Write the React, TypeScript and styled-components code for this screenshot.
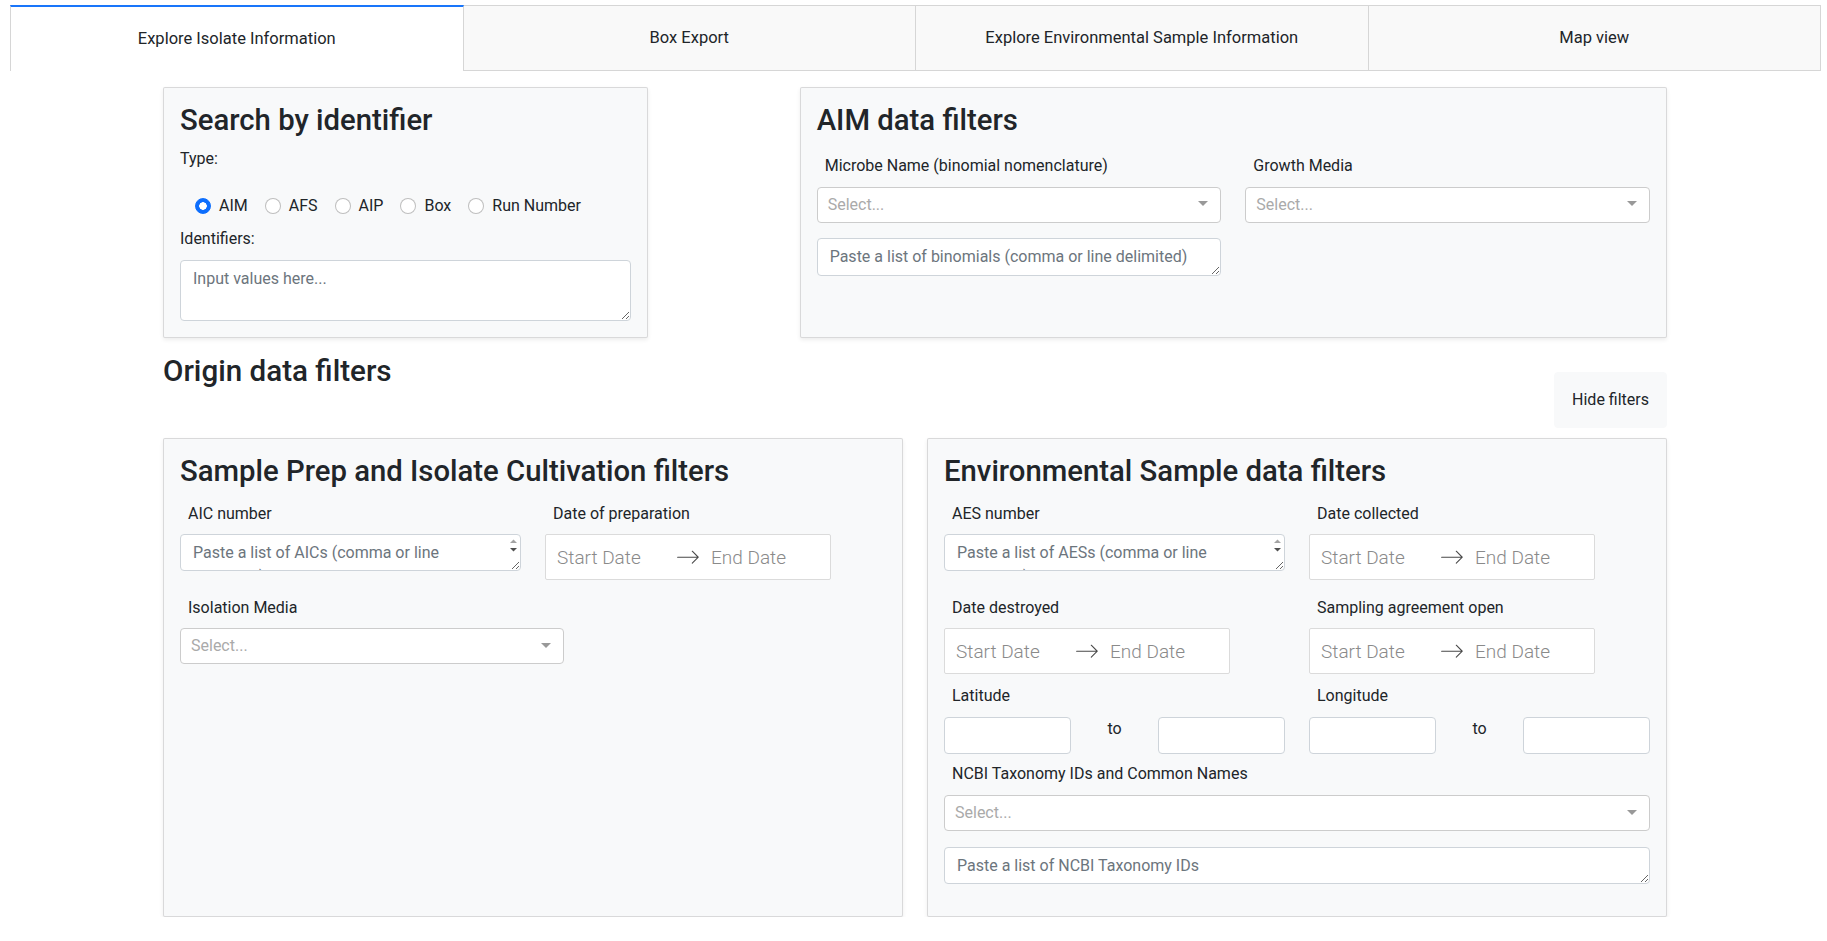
import styled, { createGlobalStyle } from "styled-components";

const GlobalStyle = createGlobalStyle`
  * { box-sizing: border-box; }
  body {
    margin: 0;
    background: #fff;
    color: #212529;
    font-family: Roboto, "Liberation Sans", sans-serif;
    font-size: 16px;
    line-height: 1.5;
  }
`;

const TabBar = styled.nav`
  display: flex;
  height: 66px;
  margin: 5px 6px 0 10px;
`;

const Tab = styled.div<{ $active?: boolean }>`
  flex: 1;
  display: flex;
  align-items: center;
  justify-content: center;
  padding-top: 1px;
  border: 1px solid #d6d6d6;
  border-top: ${(p) => (p.$active ? "2px solid #1975fa" : "1px solid #d6d6d6")};
  border-bottom: ${(p) => (p.$active ? "none" : "1px solid #d6d6d6")};
  background: ${(p) => (p.$active ? "#fff" : "#f9f9f9")};
  font-size: 16.5px;
  color: #212529;
  cursor: pointer;
  & + & {
    border-left: none;
  }
`;

const Page = styled.main`
  display: grid;
  grid-template-columns: repeat(12, minmax(0, 1fr));
  column-gap: 24px;
  padding: 16px 160px 0 163px;
`;

const Card = styled.section<{ $col: string }>`
  grid-column: ${(p) => p.$col};
  background: #f8f9fa;
  border: 1px solid rgba(0, 0, 0, 0.125);
  border-radius: 2px;
  box-shadow: 0 2px 4px rgba(0, 0, 0, 0.075);
  padding: 16px;
`;

const CardTitle = styled.h3<{ $mb: number }>`
  margin: 0 0 ${(p) => p.$mb}px;
  font-size: 29.3px;
  font-weight: 500;
  line-height: 33.6px;
`;

const SectionHead = styled.div`
  grid-column: 1 / -1;
  display: flex;
  justify-content: space-between;
  align-items: flex-start;
  margin: 17px 0 10px;
`;

const SectionTitle = styled.h3`
  margin: 0;
  font-size: 29.6px;
  font-weight: 500;
  line-height: 33.6px;
`;

const LightButton = styled.button`
  margin-top: 17px;
  padding: 15px 17px;
  border: 1px solid #f8f9fa;
  border-radius: 4px;
  background: #f8f9fa;
  color: #212529;
  font: inherit;
  line-height: 24px;
  cursor: pointer;
`;

const FieldLabel = styled.label<{ $indent?: boolean; $mb?: number }>`
  display: block;
  line-height: 24px;
  padding-left: ${(p) => (p.$indent ? 8 : 0)}px;
  margin-bottom: ${(p) => p.$mb ?? 8}px;
`;

const TwoCol = styled.div<{ $mb?: number }>`
  display: grid;
  grid-template-columns: minmax(0, 1fr) minmax(0, 1fr);
  column-gap: 24px;
  align-items: start;
  margin-bottom: ${(p) => p.$mb ?? 0}px;
`;

const RadioGroup = styled.div`
  display: flex;
  padding-left: 15px;
  margin: 23px 0 9px;
  line-height: 24px;
`;

const RadioItem = styled.label`
  display: inline-flex;
  align-items: center;
  gap: 8px;
  margin-right: 17px;
`;

const Radio = styled.input`
  appearance: none;
  margin: 0;
  width: 16px;
  height: 16px;
  border-radius: 50%;
  border: 1px solid rgba(0, 0, 0, 0.25);
  background: #fff;
  &:checked {
    border-color: #0d6efd;
    background: radial-gradient(circle, #fff 0 3.5px, #0d6efd 4px);
  }
`;

const TextArea = styled.textarea<{ $h: number; $scroll?: boolean }>`
  display: block;
  width: 100%;
  height: ${(p) => p.$h}px;
  margin: 0;
  padding: 6px ${(p) => (p.$scroll ? 24 : 12)}px 6px 12px;
  border: 1px solid #ced4da;
  border-radius: 4px;
  background: #fff;
  color: #212529;
  font: inherit;
  line-height: 24px;
  overflow: hidden;
  &::placeholder {
    color: #6c757d;
  }
`;

const ScrollBox = styled.div`
  position: relative;
`;

const ScrollArrows = styled.svg`
  position: absolute;
  top: 5px;
  right: 4px;
  pointer-events: none;
`;

const Dropdown = styled.div<{ $w?: string }>`
  display: flex;
  align-items: center;
  width: ${(p) => p.$w ?? "100%"};
  height: 36px;
  padding-left: 10px;
  border: 1px solid #ccc;
  border-radius: 4px;
  background: #fff;
  color: #aaa;
`;

const Caret = styled.span`
  margin-left: auto;
  margin-right: 12px;
  border-style: solid;
  border-width: 5px 5px 2.5px;
  border-color: #999 transparent transparent;
`;

const DateRange = styled.div`
  display: inline-flex;
  align-items: center;
  border: 1px solid #dbdbdb;
  border-radius: 2px;
  background: #fff;
`;

const DateInput = styled.input`
  width: 130px;
  padding: 11px 11px 9px;
  border: 0;
  background: transparent;
  font-family: Roboto, "Liberation Sans", sans-serif;
  font-size: 19px;
  font-weight: 300;
  line-height: 24px;
  color: #484848;
  &::placeholder {
    color: #8a8a8a;
  }
`;

const CoordPair = styled.div`
  display: grid;
  grid-template-columns: 127px 1fr 127px;
  align-items: start;
`;

const NumberInput = styled.input`
  width: 127px;
  height: 37px;
  border: 1px solid #ced4da;
  border-radius: 4px;
  background: #fff;
`;

const To = styled.span`
  text-align: center;
  line-height: 24px;
`;

const Spacer = styled.div<{ $h: number }>`
  height: ${(p) => p.$h}px;
`;

function Select({ width }: { width?: string }) {
  return (
    <Dropdown $w={width}>
      Select...
      <Caret />
    </Dropdown>
  );
}

function ListInput({ placeholder }: { placeholder: string }) {
  return (
    <ScrollBox>
      <TextArea $h={37} $scroll rows={1} placeholder={placeholder} />
      <ScrollArrows width="7" height="13" viewBox="0 0 7 13">
        <polygon points="0,4 3.5,0.5 7,4" fill="#a3a3a3" />
        <polygon points="0,9 7,9 3.5,12.5" fill="#505050" />
      </ScrollArrows>
    </ScrollBox>
  );
}

function DatePicker() {
  return (
    <DateRange>
      <DateInput placeholder="Start Date" readOnly />
      <svg width="24" height="24" viewBox="0 0 1000 1000" fill="#484848">
        <path d="M694 242l249 250c12 11 12 21 1 32L694 773c-5 5-10 7-16 7s-11-2-16-7c-11-11-11-21 0-32l210-210H68c-13 0-23-10-23-23s10-23 23-23h806L662 275c-21-22 11-54 32-33z" />
      </svg>
      <DateInput placeholder="End Date" readOnly />
    </DateRange>
  );
}

function Coords() {
  return (
    <CoordPair>
      <NumberInput type="number" />
      <To>to</To>
      <NumberInput type="number" />
    </CoordPair>
  );
}

const tabs = [
  "Explore Isolate Information",
  "Box Export",
  "Explore Environmental Sample Information",
  "Map view",
];
const idTypes = ["AIM", "AFS", "AIP", "Box", "Run Number"];

export default function App() {
  return (
    <>
      <GlobalStyle />
      <TabBar>
        {tabs.map((t, i) => (
          <Tab key={t} $active={i === 0}>
            {t}
          </Tab>
        ))}
      </TabBar>

      <Page>
        <Card $col="1 / span 4">
          <CardTitle $mb={9}>Search by identifier</CardTitle>
          <FieldLabel $mb={0}>Type:</FieldLabel>
          <RadioGroup>
            {idTypes.map((t, i) => (
              <RadioItem key={t}>
                <Radio type="radio" name="idtype" defaultChecked={i === 0} />
                {t}
              </RadioItem>
            ))}
          </RadioGroup>
          <FieldLabel $mb={9}>Identifiers:</FieldLabel>
          <TextArea $h={61} placeholder="Input values here..." />
        </Card>

        <Card $col="6 / span 7">
          <CardTitle $mb={16}>AIM data filters</CardTitle>
          <TwoCol $mb={15}>
            <div>
              <FieldLabel $indent $mb={9}>
                Microbe Name (binomial nomenclature)
              </FieldLabel>
              <Select />
            </div>
            <div>
              <FieldLabel $indent $mb={9}>
                Growth Media
              </FieldLabel>
              <Select />
            </div>
          </TwoCol>
          <TwoCol>
            <TextArea
              $h={38}
              rows={1}
              placeholder="Paste a list of binomials (comma or line delimited)"
            />
          </TwoCol>
        </Card>

        <SectionHead>
          <SectionTitle>Origin data filters</SectionTitle>
          <LightButton>Hide filters</LightButton>
        </SectionHead>

        <Card $col="1 / span 6">
          <CardTitle $mb={14}>Sample Prep and Isolate Cultivation filters</CardTitle>
          <TwoCol $mb={16}>
            <div>
              <FieldLabel $indent>AIC number</FieldLabel>
              <ListInput placeholder="Paste a list of AICs (comma or line delimited)" />
            </div>
            <div>
              <FieldLabel $indent>Date of preparation</FieldLabel>
              <DatePicker />
            </div>
          </TwoCol>
          <FieldLabel $indent>Isolation Media</FieldLabel>
          <Select width="384px" />
        </Card>

        <Card $col="7 / span 6">
          <CardTitle $mb={14}>Environmental Sample data filters</CardTitle>
          <TwoCol $mb={16}>
            <div>
              <FieldLabel $indent>AES number</FieldLabel>
              <ListInput placeholder="Paste a list of AESs (comma or line delimited)" />
            </div>
            <div>
              <FieldLabel $indent>Date collected</FieldLabel>
              <DatePicker />
            </div>
          </TwoCol>
          <TwoCol $mb={10}>
            <div>
              <FieldLabel $indent>Date destroyed</FieldLabel>
              <DatePicker />
            </div>
            <div>
              <FieldLabel $indent>Sampling agreement open</FieldLabel>
              <DatePicker />
            </div>
          </TwoCol>
          <TwoCol $mb={8}>
            <div>
              <FieldLabel $indent $mb={9}>
                Latitude
              </FieldLabel>
              <Coords />
            </div>
            <div>
              <FieldLabel $indent $mb={9}>
                Longitude
              </FieldLabel>
              <Coords />
            </div>
          </TwoCol>
          <FieldLabel $indent $mb={9}>
            NCBI Taxonomy IDs and Common Names
          </FieldLabel>
          <Select />
          <Spacer $h={16} />
          <TextArea $h={37} rows={1} placeholder="Paste a list of NCBI Taxonomy IDs" />
          <Spacer $h={16} />
        </Card>
      </Page>
    </>
  );
}
